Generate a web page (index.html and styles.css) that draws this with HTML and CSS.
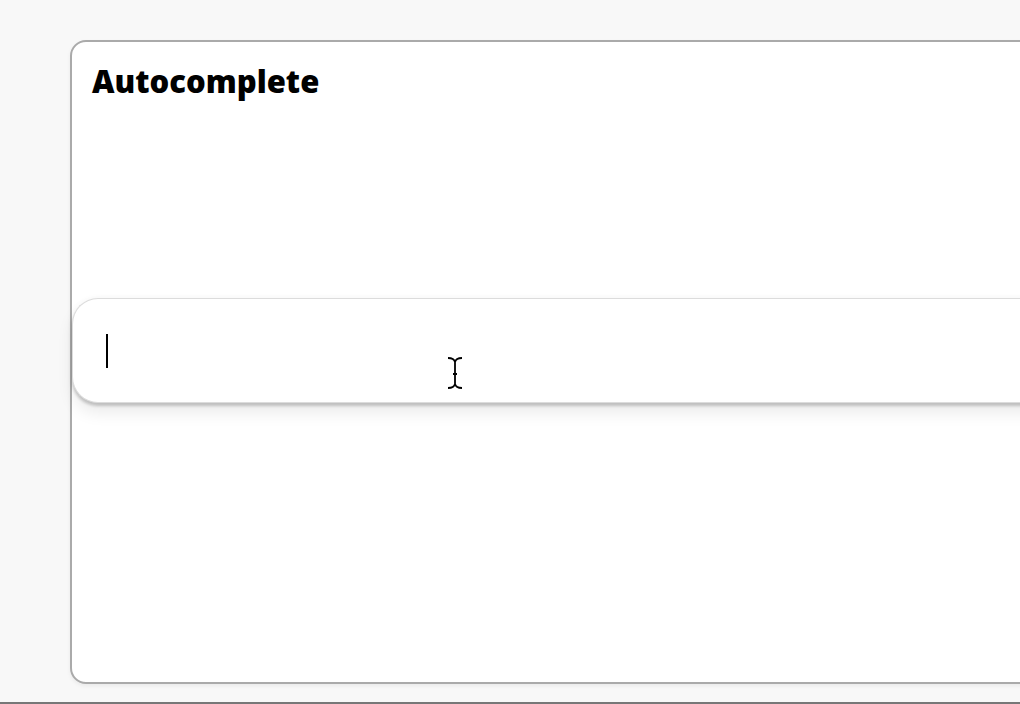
FILE: index.html
```html
<!DOCTYPE html>
<html lang="en">
<head>
  <meta charset="UTF-8" />
  <meta name="viewport" content="width=device-width, initial-scale=1.0"/>
  <title>Autocomplete</title>
  <link rel="stylesheet" href="styles.css">
</head>
<body>

  <div class="card">
    <h1 class="card-title">Autocomplete</h1>

    <div class="search-box">
      <span class="caret"></span>
    </div>
  </div>

  <svg class="mouse-cursor" width="18" height="34" viewBox="0 0 18 34">
    <path d="M2 2 Q8 2 9 6 Q10 2 16 2 M9 6 V28 M2 32 Q8 32 9 28 Q10 32 16 32 M7 18 H11"
          fill="none" stroke="#fff" stroke-width="3.5" stroke-linecap="round"/>
    <path d="M2 2 Q8 2 9 6 Q10 2 16 2 M9 6 V28 M2 32 Q8 32 9 28 Q10 32 16 32 M7 18 H11"
          fill="none" stroke="#000" stroke-width="1.8"/>
  </svg>

  <div class="bottom-edge"></div>

</body>
</html>
```

FILE: styles.css
```css
html, body {
  height: 100%;
}

body {
  margin: 0;
  background: #f8f8f8;
  font-family: 'Open Sans', 'Lato', sans-serif;
  overflow: hidden;
  position: relative;
}

.card {
  margin: 40px 0 0 70px;
  width: 1000px;
  height: 640px;
  background: #fff;
  border: 2px solid #aaa;
  border-radius: 16px;
  box-shadow: 0 2px 4px rgba(0, 0, 0, 0.06);
}

.card-title {
  margin: 0;
  padding: 20px 20px 0;
  font-size: 31px;
  font-weight: 800;
  line-height: 38px;
  color: #000;
}

.search-box {
  margin-top: 198px;
  height: 103px;
  background: #fff;
  border: 1px solid #dcdcdc;
  border-right: none;
  border-radius: 26px 0 0 26px;
  box-shadow: 0 0 6px rgba(0, 0, 0, 0.04), 0 3px 3px rgba(0, 0, 0, 0.18), 0 10px 16px rgba(0, 0, 0, 0.08);
  display: flex;
  align-items: center;
  padding-left: 33px;
}

.caret {
  width: 2px;
  height: 34px;
  background: #000;
  margin-top: 1px;
}

.mouse-cursor {
  position: absolute;
  left: 446px;
  top: 356px;
}

.bottom-edge {
  position: absolute;
  left: 0;
  right: 0;
  bottom: 0;
  height: 2px;
  background: #777;
}
```
